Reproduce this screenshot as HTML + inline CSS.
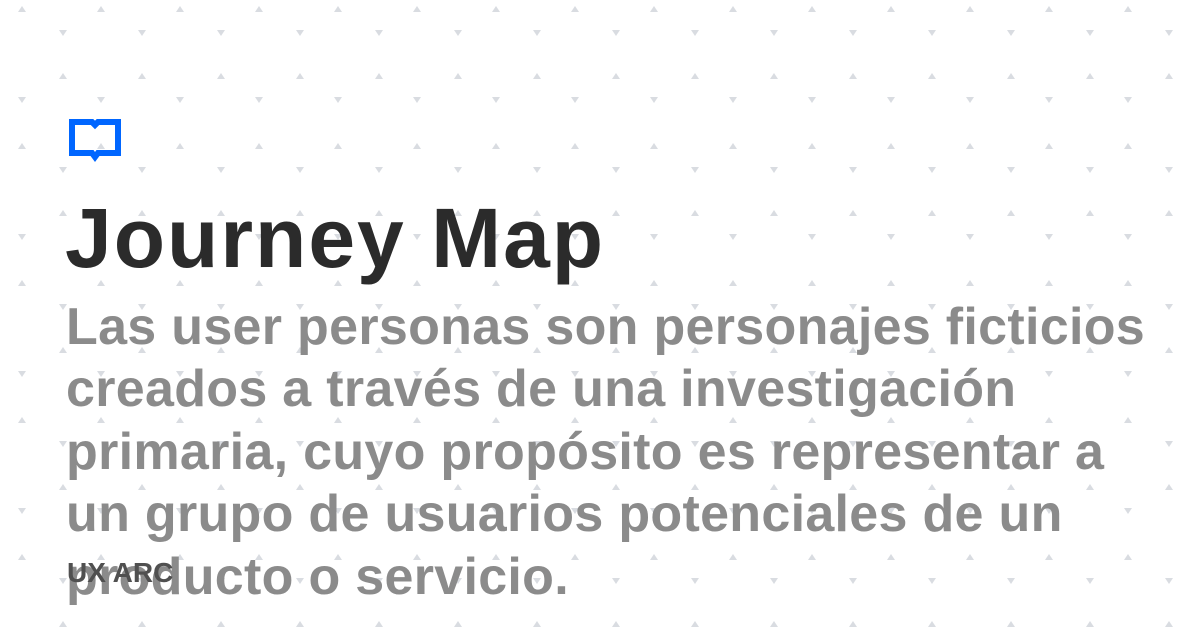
<!DOCTYPE html>
<html><head><meta charset="utf-8"><style>
html,body{margin:0;padding:0}
body{width:1200px;height:630px;overflow:hidden;position:relative;background:#fff;font-family:"Liberation Sans",sans-serif}
svg.bg{position:absolute;left:0;top:0}
.t{position:absolute;white-space:nowrap;font-weight:bold}
#title{left:65px;top:190px;font-size:84px;color:#2b2b2b;line-height:96px;letter-spacing:2px}
.b{left:66px;font-size:52px;color:#8b8b8b;line-height:60px;letter-spacing:0.3px}
#brand{left:67px;top:556px;font-size:28px;color:#505050;line-height:34px}
</style></head><body>
<svg class="bg" width="1200" height="630">
<defs>
<pattern id="p" x="0" y="0" width="79" height="137" patternUnits="userSpaceOnUse">
<path d="M18 12 L22 6 L26 12 Z" fill="#d9dce1"/>
<path d="M59 30 L67 30 L63 36 Z" fill="#d9dce1"/>
<path d="M59 79 L63 73 L67 79 Z" fill="#d9dce1"/>
<path d="M18 97 L26 97 L22 103 Z" fill="#d9dce1"/>
</pattern>
</defs>
<rect width="1200" height="630" fill="url(#p)"/>
<path d="M72 122 H92 L95 125 L98 122 H118 V153 H98 L95 157 L92 153 H72 Z" fill="none" stroke="#0066ff" stroke-width="6" stroke-linejoin="miter"/>
</svg>
<div class="t" id="title">Journey Map</div>
<div class="t b" style="top:297px">Las user personas son personajes ficticios</div>
<div class="t b" style="top:359px">creados a través de una investigación</div>
<div class="t b" style="top:422px">primaria, cuyo propósito es representar a</div>
<div class="t b" style="top:484px">un grupo de usuarios potenciales de un</div>
<div class="t b" style="top:547px">producto o servicio.</div>
<div class="t" id="brand">UX ARC</div>
</body></html>
